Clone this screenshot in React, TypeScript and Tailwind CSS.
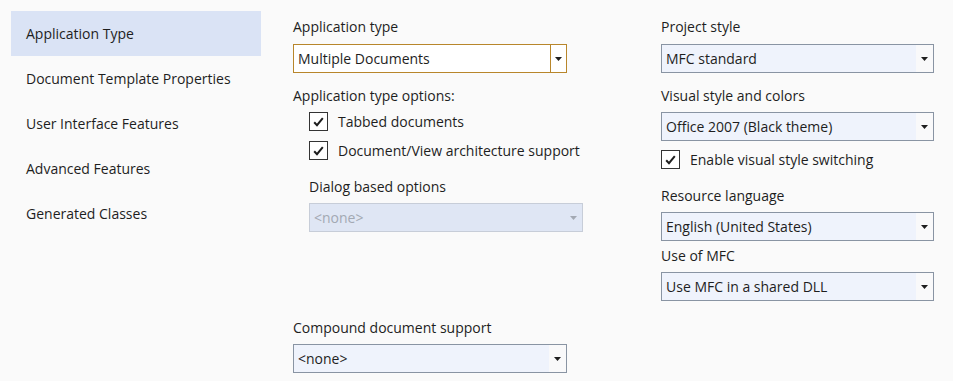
import React from "react";

const font = { fontFamily: '"Open Sans", "Noto Sans", sans-serif' };

function Arrow({ color = "#1e1e1e" }: { color?: string }) {
  return (
    <svg width="7" height="4" viewBox="0 0 7 4">
      <path d="M0 0 H7 L3.5 4 Z" fill={color} />
    </svg>
  );
}

function Dropdown({
  text,
  kind = "normal",
  className = "",
}: {
  text: string;
  kind?: "normal" | "focus" | "disabled";
  className?: string;
}) {
  if (kind === "focus") {
    return (
      <div className={`flex h-[29px] border border-[#b8862b] bg-white ${className}`}>
        <div className="flex flex-1 items-center pl-[4px] text-[#1e1e1e]">{text}</div>
        <div className="flex w-[16px] items-center justify-center border-l border-[#b8862b]">
          <Arrow />
        </div>
      </div>
    );
  }
  if (kind === "disabled") {
    return (
      <div className={`flex h-[29px] border border-[#c7cdd8] bg-[#dfe6f4] ${className}`}>
        <div className="flex flex-1 items-center pl-[4px] text-[#a3a9b3]">{text}</div>
        <div className="flex w-[17px] items-center justify-center">
          <Arrow color="#a3a9b3" />
        </div>
      </div>
    );
  }
  return (
    <div className={`flex h-[29px] border border-[#8994a3] bg-[#eff3fc] ${className}`}>
      <div className="flex flex-1 items-center pl-[4px] text-[#1e1e1e]">{text}</div>
      <div className="flex w-[17px] items-center justify-center bg-[#f9f9fa]">
        <Arrow />
      </div>
    </div>
  );
}

function Check({ label, className = "" }: { label: string; className?: string }) {
  return (
    <div className={`flex h-[19px] items-center ${className}`}>
      <div className="flex h-[19px] w-[19px] items-center justify-center border border-[#333333] bg-white">
        <svg width="11" height="10" viewBox="0 0 11 10">
          <path d="M1.2 5.2 L4 8.2 L9.8 1.2" fill="none" stroke="#1e1e1e" strokeWidth="2" />
        </svg>
      </div>
      <span className="ml-[10px] text-[#1e1e1e]">{label}</span>
    </div>
  );
}

function Label({ children, className = "" }: { children: React.ReactNode; className?: string }) {
  return <div className={`h-[20px] leading-[20px] text-[#1e1e1e] ${className}`}>{children}</div>;
}

export default function App() {
  const nav = [
    "Application Type",
    "Document Template Properties",
    "User Interface Features",
    "Advanced Features",
    "Generated Classes",
  ];
  return (
    <div
      className="flex h-[381px] w-[953px] bg-[#fafafa] text-[14px] leading-[20px]"
      style={font}
    >
      <div className="ml-[11px] mt-[11px] w-[250px] shrink-0">
        {nav.map((n, i) => (
          <div
            key={n}
            className={`flex h-[45px] items-center pl-[15px] text-[#1e1e1e] ${
              i === 0 ? "bg-[#dae3f5]" : ""
            }`}
          >
            {n}
          </div>
        ))}
      </div>

      <div className="ml-[32px] flex w-[290px] shrink-0 flex-col pt-[17px]">
        <Label>Application type</Label>
        <Dropdown text="Multiple Documents" kind="focus" className="mt-[7px] w-[274px]" />
        <Label className="mt-[13px]">Application type options:</Label>
        <div className="ml-[16px] mt-[6px] flex flex-col">
          <Check label="Tabbed documents" />
          <Check label="Document/View architecture support" className="mt-[10px]" />
          <Label className="mt-[17px]">Dialog based options</Label>
          <Dropdown text="<none>" kind="disabled" className="mt-[6px] w-[274px]" />
        </div>
        <Label className="mt-[86px]">Compound document support</Label>
        <Dropdown text="<none>" className="mt-[6px] w-[274px]" />
      </div>

      <div className="ml-[78px] flex w-[273px] shrink-0 flex-col pt-[17px]">
        <Label>Project style</Label>
        <Dropdown text="MFC standard" className="mt-[7px] w-[273px]" />
        <Label className="mt-[13px]">Visual style and colors</Label>
        <Dropdown text="Office 2007 (Black theme)" className="mt-[6px] w-[273px]" />
        <Check label="Enable visual style switching" className="mt-[9px]" />
        <Label className="mt-[17px]">Resource language</Label>
        <Dropdown text="English (United States)" className="mt-[6px] w-[273px]" />
        <Label className="mt-[5px]">Use of MFC</Label>
        <Dropdown text="Use MFC in a shared DLL" className="mt-[6px] w-[273px]" />
      </div>
    </div>
  );
}
